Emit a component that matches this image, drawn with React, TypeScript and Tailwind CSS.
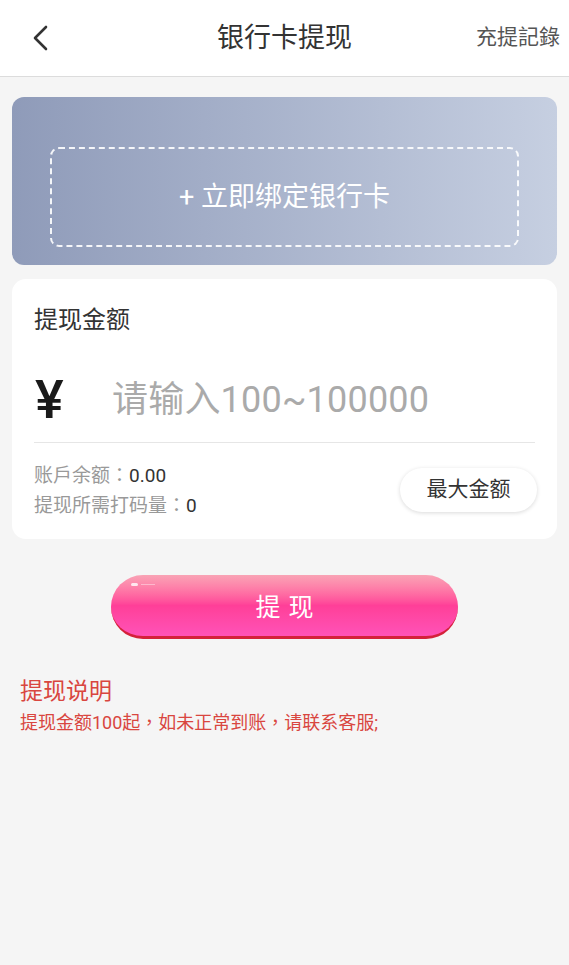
import React from 'react'

const font = { fontFamily: 'Roboto, "Noto Sans CJK SC", sans-serif' }
const tc = { fontFamily: '"Noto Sans CJK TC", sans-serif' }

function Header() {
  return (
    <div className="h-[77px] bg-white border-b border-[#dcdcdc] grid grid-cols-[1fr_auto_1fr] items-center px-[9px]">
      <div className="pl-[20px]">
        <svg width="24" height="30" viewBox="0 0 24 30">
          <path d="M17 4 L6 15 L17 26" fill="none" stroke="#333" strokeWidth="2.6" strokeLinecap="round" strokeLinejoin="round" />
        </svg>
      </div>
      <div className="text-[27px] text-[#333]">银行卡提现</div>
      <div className="text-right text-[21px] text-[#555]">充提記錄</div>
    </div>
  )
}

export default function App() {
  return (
    <div className="w-[569px] h-[965px] bg-[#f5f5f5] overflow-hidden" style={font}>
      <Header />
      <div className="px-[12px] pt-[20px]">
        <div className="h-[168px] rounded-[12px] bg-gradient-to-r from-[#8f9bb9] to-[#c6cfe1] flex justify-center pt-[50px]">
          <div className="w-[469px] h-[100px] rounded-[9px] border-2 border-dashed border-white/90 flex items-center justify-center">
            <span className="text-white text-[27px]">+ 立即绑定银行卡</span>
          </div>
        </div>

        <div className="mt-[14px] bg-white rounded-[14px] px-[22px] pt-[26px] pb-[19px]">
          <div className="text-[24px] text-[#333] leading-[30px]">提现金额</div>
          <div className="flex items-center h-[86px] mt-[22px] border-b border-[#e6e6e6]">
            <span className="text-[54px] text-[#1a1a1a] font-medium w-[78px] leading-none pl-[1px]">¥</span>
            <span className="text-[36px] text-[#aaa] tracking-[0.2px]">请输入100~100000</span>
          </div>
          <div className="flex items-center justify-between mt-[17px]">
            <div className="text-[19px] leading-[28px]">
              <div><span className="text-[#999]">账戶余额<span style={tc}>：</span></span><span className="text-[#333]">0.00</span></div>
              <div><span className="text-[#999]">提现所需打码量<span style={tc}>：</span></span><span className="text-[#333]">0</span></div>
            </div>
            <div className="w-[137px] h-[44px] rounded-full bg-white shadow-[0_1px_4px_rgba(0,0,0,0.15)] flex items-center justify-center text-[21px] text-[#333] mr-[-2px]">
              最大金额
            </div>
          </div>
        </div>
      </div>

      <div className="flex justify-center mt-[36px]">
        <div className="relative w-[347px] h-[64px] rounded-full bg-gradient-to-b from-[#f9a3b5] via-[#ff3f98] to-[#ff52b8] border-b-[3px] border-[#d4213a] flex items-center justify-center pt-[5px]">
          <div className="absolute left-[20px] top-[8px] w-[7px] h-[3px] rounded-full bg-white/80" />
          <div className="absolute left-[30px] top-[9px] w-[14px] h-[1px] bg-white/40" />
          <span className="text-white text-[25px] tracking-[8px] pl-[8px]">提现</span>
        </div>
      </div>

      <div className="px-[20px] mt-[38px] text-[#d9463f]">
        <div className="text-[23px] leading-[30px]">提现说明</div>
        <div className="text-[18px] leading-[28px]">
          提现金额100起<span style={tc}>，</span>如未正常到账<span style={tc}>，</span>请联系客服;
        </div>
      </div>
    </div>
  )
}
